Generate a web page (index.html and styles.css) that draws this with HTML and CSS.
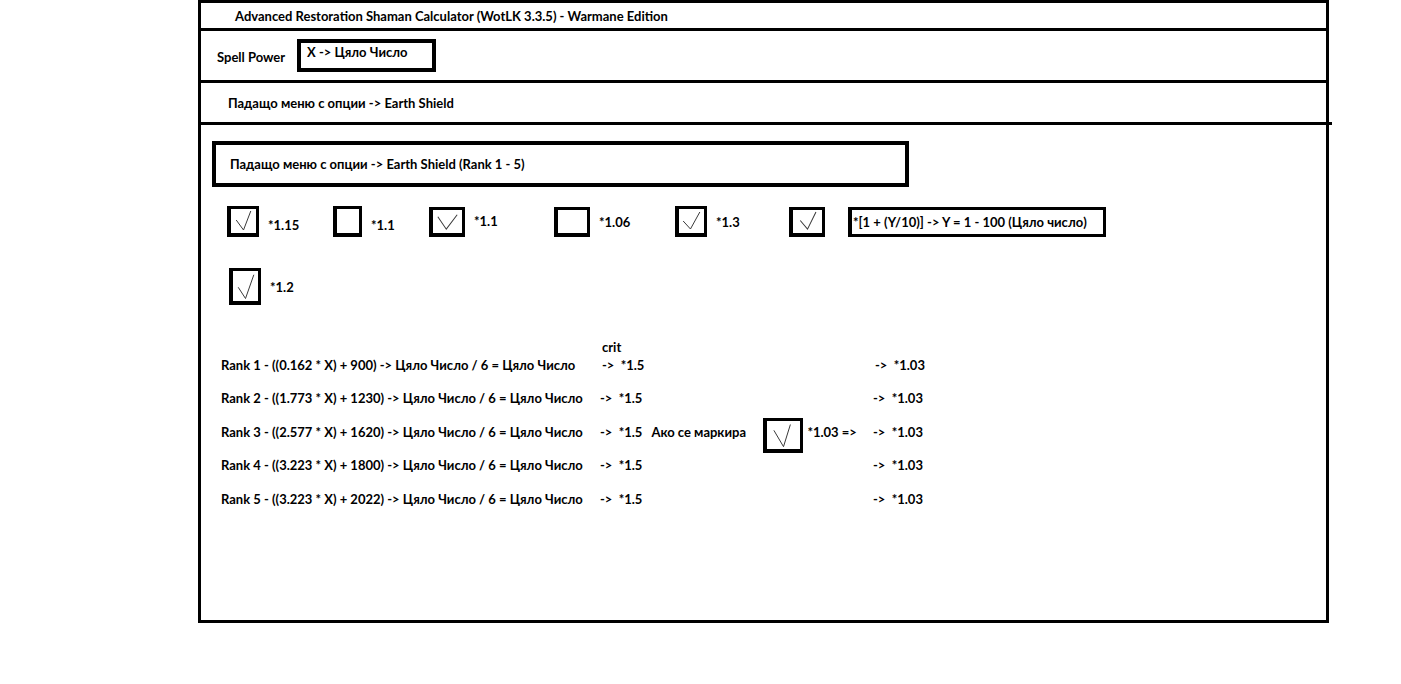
FILE: index.html
```html
<!DOCTYPE html>
<html lang="bg">
<head>
    <meta charset="UTF-8">
    <meta name="viewport" content="width=device-width, initial-scale=1.0">
    <title>Restoration Shaman Calculator</title>
    <link rel="stylesheet" href="styles.css">
</head>
<body>
    <div class="frame">
        <div class="row row-title">Advanced Restoration Shaman Calculator (WotLK 3.3.5) - Warmane Edition</div>

        <div class="row row-power">
            <span class="power-label">Spell Power</span>
            <div class="field">X -&gt; Цяло Число</div>
        </div>

        <div class="row row-spell">Падащо меню с опции -&gt; Earth Shield</div>

        <div class="main">
            <div class="select">Падащо меню с опции -&gt; Earth Shield (Rank 1 - 5)</div>

            <div class="options">
                <div class="opt">
                    <span class="box checked"><svg viewBox="0 0 24 24" preserveAspectRatio="none"><polyline points="5,11 12,21 19,2"/></svg></span>
                    <span class="opt-label low">*1.15</span>
                </div>
                <div class="opt">
                    <span class="box box-narrow"></span>
                    <span class="opt-label low">*1.1</span>
                </div>
                <div class="opt">
                    <span class="box box-wide checked"><svg viewBox="0 0 24 24" preserveAspectRatio="none"><polyline points="4,7 11,20 20,5"/></svg></span>
                    <span class="opt-label high">*1.1</span>
                </div>
                <div class="opt">
                    <span class="box box-wide"></span>
                    <span class="opt-label">*1.06</span>
                </div>
                <div class="opt">
                    <span class="box checked"><svg viewBox="0 0 24 24" preserveAspectRatio="none"><polyline points="4,12 11,20 20,3"/></svg></span>
                    <span class="opt-label">*1.3</span>
                </div>
                <div class="opt">
                    <span class="box box-wide checked"><svg viewBox="0 0 24 24" preserveAspectRatio="none"><polyline points="6,11 12,20 19,2"/></svg></span>
                    <div class="formula">*[1 + (Y/10)] -&gt; Y = 1 - 100 (Цяло число)</div>
                </div>
            </div>

            <div class="options options-second">
                <div class="opt">
                    <span class="box box-tall checked"><svg viewBox="0 0 24 24" preserveAspectRatio="none"><polyline points="5,13 12,22 20,3"/></svg></span>
                    <span class="opt-label">*1.2</span>
                </div>
            </div>

            <div class="ranks">
                <span></span><span class="crit">crit</span><span></span>

                <span class="first">Rank 1 - ((0.162 * X) + 900) -&gt; Цяло Число / 6 = Цяло Число</span>
                <span class="first shift">-&gt;&nbsp; *1.5</span>
                <span class="first shift">-&gt;&nbsp; *1.03</span>

                <span>Rank 2 - ((1.773 * X) + 1230) -&gt; Цяло Число / 6 = Цяло Число</span>
                <span>-&gt;&nbsp; *1.5</span>
                <span>-&gt;&nbsp; *1.03</span>

                <span>Rank 3 - ((2.577 * X) + 1620) -&gt; Цяло Число / 6 = Цяло Число</span>
                <span class="mark-cell">
                    <span>-&gt;&nbsp; *1.5</span>
                    <span class="mark-text">Ако се маркира</span>
                    <span class="box box-big checked"><svg viewBox="0 0 24 24" preserveAspectRatio="none"><polyline points="5,8 12,22 17,3"/></svg></span>
                    <span class="mark-after">*1.03 =&gt;</span>
                </span>
                <span>-&gt;&nbsp; *1.03</span>

                <span>Rank 4 - ((3.223 * X) + 1800) -&gt; Цяло Число / 6 = Цяло Число</span>
                <span>-&gt;&nbsp; *1.5</span>
                <span>-&gt;&nbsp; *1.03</span>

                <span>Rank 5 - ((3.223 * X) + 2022) -&gt; Цяло Число / 6 = Цяло Число</span>
                <span>-&gt;&nbsp; *1.5</span>
                <span>-&gt;&nbsp; *1.03</span>
            </div>
        </div>
    </div>
</body>
</html>
```

FILE: styles.css
```css
/* paint-style mockup of the calculator */
body{
  margin: 0;
  background: #fff;
  color: #000;
  font-family: Lato, "Noto Sans", "Liberation Sans", sans-serif;
  font-weight: bold;
  font-size: 13px;
  line-height: 14px;
}
.frame{
  box-sizing: border-box;
  margin-left: 198px;
  width: 1131px;
  height: 623px;
  border: 3px solid #000;
}
.row{
  border-bottom: 3px solid #000;
  display: flex;
  align-items: center;
}
.row-title{
  height: 25px;
  padding-left: 34px;
}
.row-power{
  height: 49px;
  padding-left: 16px;
}
.power-label{
  width: 80px;
  padding-top: 3px;
}
.field{
  box-sizing: border-box;
  width: 139px;
  height: 33px;
  border: 4px solid #000;
  padding: 2px 0 0 6px;
}
.row-spell{
  position: relative;
  height: 39px;
  padding-left: 27px;
}
/* the line sticks out past the right edge a bit */
.row-spell::after{
  content: "";
  position: absolute;
  right: -6px;
  bottom: -3px;
  width: 6px;
  height: 3px;
  background: #000;
}
.main{
  display: flex;
  flex-direction: column;
}
.select{
  box-sizing: border-box;
  margin: 16px 0 0 11px;
  width: 697px;
  height: 46px;
  border: 4px solid #000;
  padding-left: 14px;
  display: flex;
  align-items: center;
}
.options{
  margin: 19px 0 0 26px;
  display: grid;
  grid-template-columns: 106px 96px 125px 121px 114px auto;
  align-items: center;
}
.options-second{
  margin-top: 31px;
  margin-left: 28px;
}
.opt{
  display: flex;
  align-items: center;
  gap: 9px;
}
.opt-label.low{
  padding-top: 6px;
}
.opt-label.high{
  padding-bottom: 2px;
}
.box{
  box-sizing: border-box;
  display: inline-block;
  flex: none;
  width: 32px;
  height: 31px;
  border: 4px solid #000;
  border-top-width: 3px;
  border-right-width: 3px;
  background: #fff;
}
.box svg{
  display: block;
  width: 100%;
  height: 100%;
}
.box polyline{
  fill: none;
  stroke: #3a3a3a;
  stroke-width: 1;
  vector-effect: non-scaling-stroke;
}
.box-narrow{
  width: 29px;
}
.box-wide{
  width: 36px;
  height: 30px;
}
.box-tall{
  height: 37px;
}
.box-big{
  width: 40px;
  height: 35px;
}
.formula{
  box-sizing: border-box;
  margin-left: 14px;
  width: 258px;
  height: 30px;
  border: 3px solid #000;
  border-left-width: 4px;
  padding: 5px 0 0 1px;
}
.ranks{
  margin: 35px 0 0 20px;
  display: grid;
  grid-template-columns: 379px 273px auto;
  grid-template-rows: 14px 27.25px;
  grid-auto-rows: 33.5px;
  align-items: center;
}
.ranks > span:nth-child(-n+3){
  align-self: start;
}
.crit{
  padding-left: 2px;
}
.ranks > .first{
  align-self: start;
  padding-top: 4px;
}
.ranks > .shift{
  padding-left: 2px;
}
.mark-cell{
  display: flex;
  align-items: center;
  height: 33.5px;
}
.mark-text{
  margin-left: 9px;
  width: 112px;
}
.mark-cell .box{
  margin-top: 7px;
}
.mark-after{
  margin-left: 4px;
}
```
